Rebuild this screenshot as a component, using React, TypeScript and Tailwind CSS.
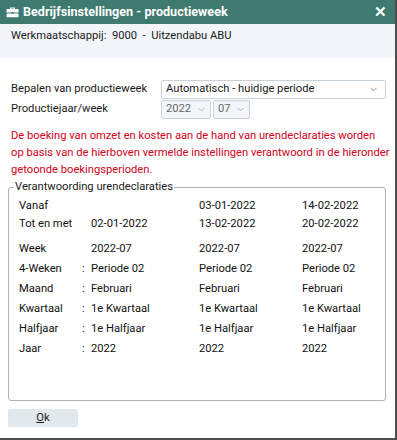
import { ChevronDown } from 'lucide-react'

const ROWS = [
  { label: 'Week', colon: false, values: ['2022-07', '2022-07', '2022-07'] },
  { label: '4-Weken', colon: true, values: ['Periode 02', 'Periode 02', 'Periode 02'] },
  { label: 'Maand', colon: true, values: ['Februari', 'Februari', 'Februari'] },
  { label: 'Kwartaal', colon: true, values: ['1e Kwartaal', '1e Kwartaal', '1e Kwartaal'] },
  { label: 'Halfjaar', colon: true, values: ['1e Halfjaar', '1e Halfjaar', '1e Halfjaar'] },
  { label: 'Jaar', colon: true, values: ['2022', '2022', '2022'] },
]

function Briefcase() {
  return (
    <svg width="13" height="12" viewBox="0 0 13 12" fill="white">
      <path d="M4 1.5h5v1.5h-1.2v-0.6h-2.6v0.6H4z" />
      <rect x="0.5" y="3" width="12" height="3.6" rx="0.6" />
      <rect x="0.5" y="7.4" width="12" height="3.8" rx="0.6" />
      <rect x="5.5" y="6" width="2" height="2" fill="#3e7a70" />
    </svg>
  )
}

export default function App() {
  return (
    <div className="w-[397px] h-[440px] bg-white flex flex-col border-r-2 border-b-2 border-[#4d4d4d] text-[11.2px] text-[#1a1a1a]" style={{ fontFamily: 'Roboto, "Liberation Sans", sans-serif' }}>
      {/* Title bar */}
      <div className="h-6 bg-[#3e7a70] flex items-center pl-[6px] pr-[8px] text-white shrink-0">
        <Briefcase />
        <span className="ml-[4px] font-bold text-[12.6px]">Bedrijfsinstellingen - productieweek</span>
        <span className="ml-auto font-black text-[15px] leading-none">✕</span>
      </div>

      {/* Company strip */}
      <div className="h-[34px] bg-[#f2f6fa] pl-[11px] pt-[4px] shrink-0">
        <span>Werkmaatschappij:&nbsp; 9000 &nbsp;-&nbsp; Uitzendabu ABU</span>
      </div>

      <div className="flex flex-col px-[8px] pt-[22px] flex-1">
        <div className="flex items-center h-[19px] pl-[3px]">
          <span className="w-[150px]">Bepalen van productieweek</span>
          <div className="flex-1 h-[19px] border border-[#c8d0d8] rounded-[2px] bg-white flex items-center pl-[4px] pr-[6px] mr-[1px]">
            <span>Automatisch - huidige periode</span>
            <ChevronDown className="ml-auto w-[11px] h-[11px] text-[#666]" strokeWidth={1.5} />
          </div>
        </div>
        <div className="flex items-center h-[19px] mt-[1px] pl-[3px]">
          <span className="w-[150px]">Productiejaar/week</span>
          <div className="w-[50px] h-[19px] border border-[#c8d0d8] rounded-[2px] bg-[#f2f6fa] flex items-center pl-[4px] pr-[3px] text-[#666]">
            <span>2022</span>
            <ChevronDown className="ml-auto w-[11px] h-[11px] text-[#999]" strokeWidth={1.5} />
          </div>
          <div className="w-[37px] h-[19px] ml-[2px] border border-[#c8d0d8] rounded-[2px] bg-[#f2f6fa] flex items-center pl-[4px] pr-[3px] text-[#666]">
            <span>07</span>
            <ChevronDown className="ml-auto w-[11px] h-[11px] text-[#999]" strokeWidth={1.5} />
          </div>
        </div>

        <p className="mt-[8px] pl-[3px] -mr-[6px] text-[#d0021b] leading-[17px] whitespace-nowrap">
          De boeking van omzet en kosten aan de hand van urendeclaraties worden
          <br />
          op basis van de hierboven vermelde instellingen verantwoord in de hieronder
          <br />
          getoonde boekingsperioden.
        </p>

        <fieldset className="mt-[1px] h-[222px] border border-[#b4b4b4] rounded-[3px] pl-[10px] pr-[4px] pt-[2px] mr-[1px]">
          <legend className="px-[1px] -ml-[5px]">Verantwoording urendeclaraties</legend>
          <div className="grid grid-cols-[63px_9px_108px_103px_auto] items-center text-[#111]">
            <div className="h-[18px] flex items-center">Vanaf</div>
            <div />
            <div />
            <div>03-01-2022</div>
            <div>14-02-2022</div>

            <div className="h-[18px] flex items-center">Tot en met</div>
            <div />
            <div>02-01-2022</div>
            <div>13-02-2022</div>
            <div>20-02-2022</div>

            <div className="h-[6px] col-span-5" />

            {ROWS.map((r) => (
              <div key={r.label} className="contents">
                <div className="h-[20px] flex items-center">{r.label}</div>
                <div>{r.colon ? ':' : ''}</div>
                {r.values.map((v, i) => (
                  <div key={i}>{v}</div>
                ))}
              </div>
            ))}
          </div>
        </fieldset>

        <div className="mt-[8px]">
          <button className="w-[70px] h-[18px] bg-[#e3e8ec] rounded-[2px]">
            <span className="underline">O</span>k
          </button>
        </div>
      </div>
    </div>
  )
}
